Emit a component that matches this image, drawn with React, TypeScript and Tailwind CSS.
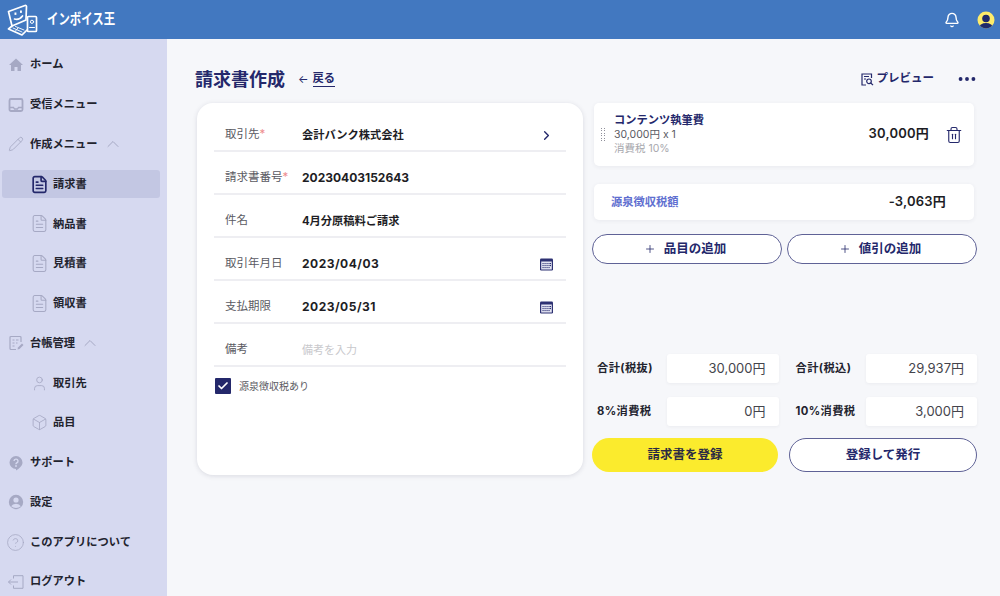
import React from 'react';
import {
  Bell,
  Box,
  Check,
  ChevronRight,
  ChevronUp,
  CircleHelp,
  FileText,
  MoreHorizontal,
  Pencil,
  Plus,
  Trash2,
  User,
} from 'lucide-react';

const Logo = () => (
  <svg width="31" height="32" viewBox="0 0 31 32" fill="none" stroke="white" strokeWidth="1.7" strokeLinejoin="round" strokeLinecap="round">
    <path d="M1.5 7.5 L18 1.5 Q19.5 1.2 19.5 2.5 L19 15 M1.5 7.5 L5 22 L19 16" />
    <path d="M5 22 L1.5 25 L15 31 L20 26" />
    <path d="M6 24 L15 28 M8.5 22.5 L17 26 M11 24 L8.5 27" strokeWidth="0.9" />
    <rect x="7.5" y="8.5" width="1.9" height="2.4" fill="white" stroke="none" />
    <rect x="13" y="6.5" width="1.9" height="2.4" fill="white" stroke="none" />
    <path d="M7.5 15 Q12 16.5 15.5 12" />
    <rect x="20.5" y="12.5" width="9" height="15" rx="1" />
    <circle cx="25" cy="17.8" r="1.6" strokeWidth="1" />
    <path d="M22.5 23.5 H27.5" strokeWidth="1" />
  </svg>
);

const HomeIcon = () => (
  <svg width="16" height="16" viewBox="0 0 16 16" fill="#a6a9c4">
    <path d="M8 1.5 L15 8 H13 V14 H9.5 V10 H6.5 V14 H3 V8 H1 Z" />
  </svg>
);

const InboxIcon = () => (
  <svg width="16" height="16" viewBox="0 0 16 16" fill="none" stroke="#a6a9c4" strokeWidth="1.8">
    <rect x="1.5" y="2" width="13" height="12" rx="1.5" />
    <path d="M2 10.5 H5.5 L6.5 12 H9.5 L10.5 10.5 H14" strokeWidth="1.3" />
  </svg>
);

const LedgerIcon = () => (
  <svg width="16" height="16" viewBox="0 0 16 16" fill="none" stroke="#a6a9c4" strokeWidth="1.2">
    <path d="M13 7 V2.5 A1 1 0 0 0 12 1.5 H3 A1 1 0 0 0 2 2.5 V13.5 A1 1 0 0 0 3 14.5 H8" />
    <path d="M4.5 5h2M8 5h2.5M4.5 8h2M8 8h1.5M4.5 11h2" />
    <path d="M9.5 14.5 L10 12.5 L14 8.5 L15.5 10 L11.5 14 Z" fill="#a6a9c4" stroke="none" />
  </svg>
);

const SupportIcon = () => (
  <svg width="16" height="16" viewBox="0 0 16 16">
    <path d="M8 1 A6.5 6.5 0 0 1 14.5 7.5 C14.5 11 11 13.5 8 15.5 C8 14 8 14 8 14 A6.5 6.5 0 0 1 8 1 Z" fill="#a6a9c4" />
    <path d="M6 6 A2 2 0 1 1 8.6 8 Q8 8.3 8 9.2" fill="none" stroke="#d6d9f0" strokeWidth="1.4" />
    <circle cx="8" cy="11" r="0.9" fill="#d6d9f0" />
  </svg>
);

const SettingsIcon = () => (
  <svg width="16" height="16" viewBox="0 0 16 16">
    <circle cx="8" cy="8" r="7.2" fill="#a6a9c4" />
    <circle cx="8" cy="6" r="2.6" fill="#d6d9f0" />
    <path d="M3.2 12.3 Q4.5 9.8 8 9.8 Q11.5 9.8 12.8 12.3 Q10.8 14 8 14 Q5.2 14 3.2 12.3 Z" fill="#d6d9f0" />
  </svg>
);

const LogoutIcon = () => (
  <svg width="16" height="14" viewBox="0 0 16 14" fill="none" stroke="#a6a9c4" strokeWidth="1">
    <path d="M5.5 3.5 V0.7 H15 V13.3 H5.5 V10.5" />
    <path d="M0.5 7 H10 M3 4.5 L0.5 7 L3 9.5" />
  </svg>
);

const CalendarIcon = () => (
  <svg width="13" height="13" viewBox="0 0 13 13">
    <rect x="0" y="0.5" width="13" height="12" rx="1.2" fill="#2d3172" />
    <rect x="1.2" y="3.5" width="10.6" height="8" fill="#e3e4f2" />
    {[2.5, 4.5, 6.5, 8.5].map((x) => (
      <React.Fragment key={x}>
        <rect x={x} y="5" width="1.1" height="1.1" fill="#2d3172" />
        <rect x={x} y="7" width="1.1" height="1.1" fill="#2d3172" />
        <rect x={x} y="9" width="1.1" height="1.1" fill="#2d3172" />
      </React.Fragment>
    ))}
    <rect x="10" y="5" width="1" height="1.1" fill="#2d3172" />
    <rect x="10" y="7" width="1" height="1.1" fill="#2d3172" />
  </svg>
);

const PreviewIcon = () => (
  <svg width="13" height="13" viewBox="0 0 13 13" fill="none" stroke="#24286b" strokeWidth="1.2">
    <path d="M5 12 H1 V1 H10.5 V5" />
    <path d="M3 3.5h5M3 6h2" strokeWidth="1" />
    <circle cx="8" cy="8.3" r="2.3" />
    <path d="M9.8 10 L12 12.2" />
  </svg>
);

const AvatarIcon = () => (
  <svg width="18" height="18" viewBox="0 0 18 18">
    <defs>
      <clipPath id="avatar-clip">
        <circle cx="9" cy="9" r="8.5" />
      </clipPath>
    </defs>
    <circle cx="9" cy="9" r="8.5" fill="#fdeb6a" />
    <g clipPath="url(#avatar-clip)" fill="#1f2a6b">
      <circle cx="9" cy="7.5" r="3.8" />
      <ellipse cx="9" cy="17" rx="7" ry="5" />
    </g>
  </svg>
);

const DragHandle = () => (
  <div className="grid grid-cols-2 gap-x-[2px] gap-y-[1.5px]">
    {Array.from({ length: 12 }).map((_, i) => (
      <span key={i} className="block h-px w-px bg-[#8f8f9a]" />
    ))}
  </div>
);

const docIcon = (active: boolean) => (
  <FileText size={19} strokeWidth={active ? 2.1 : 1.3} className={active ? 'ml-[-1px] text-[#24286b]' : 'ml-[-1px] text-[#a6a9c4]'} />
);

const NavItem = ({ icon, label, open }: { icon: React.ReactNode; label: string; open?: boolean }) => (
  <div className="flex h-[39.77px] items-center pl-[8px]">
    <span className="flex w-[22px] shrink-0 items-center">{icon}</span>
    <span className="text-[11.25px] font-bold text-[#22232e]">{label}</span>
    {open && <ChevronUp size={20} strokeWidth={1.2} className="ml-[5px] text-[#a6a9c4]" />}
  </div>
);

const SubItem = ({ icon, label, active }: { icon: React.ReactNode; label: string; active?: boolean }) => (
  <div className="flex h-[39.77px] items-center">
    <div className={`ml-[2px] flex h-[28px] w-[158px] items-center rounded-[3px] pl-[29px] ${active ? 'bg-[#c3c7e3]' : ''}`}>
      <span className="flex w-[22px] shrink-0 items-center">{icon}</span>
      <span className="text-[11.25px] font-bold text-[#22232e]">{label}</span>
    </div>
  </div>
);

const Sidebar = () => (
  <aside className="h-full w-[167px] shrink-0 overflow-hidden bg-[#d6d9f0] pt-[6px]">
    <NavItem icon={<HomeIcon />} label="ホーム" />
    <NavItem icon={<InboxIcon />} label="受信メニュー" />
    <NavItem icon={<Pencil size={16} strokeWidth={1.3} className="text-[#a6a9c4]" />} label="作成メニュー" open />
    <SubItem icon={docIcon(true)} label="請求書" active />
    <SubItem icon={docIcon(false)} label="納品書" />
    <SubItem icon={docIcon(false)} label="見積書" />
    <SubItem icon={docIcon(false)} label="領収書" />
    <NavItem icon={<LedgerIcon />} label="台帳管理" open />
    <SubItem icon={<User size={17} strokeWidth={1.2} className="text-[#a6a9c4]" />} label="取引先" />
    <SubItem icon={<Box size={17} strokeWidth={1.2} className="text-[#a6a9c4]" />} label="品目" />
    <NavItem icon={<SupportIcon />} label="サポート" />
    <NavItem icon={<SettingsIcon />} label="設定" />
    <NavItem icon={<CircleHelp size={19} strokeWidth={1} className="ml-[-2px] text-[#a6a9c4]" />} label="このアプリについて" />
    <NavItem icon={<LogoutIcon />} label="ログアウト" />
  </aside>
);

const FormRow = ({ label, required, children, right }: { label: string; required?: boolean; children: React.ReactNode; right?: React.ReactNode }) => (
  <div className="flex h-[43px] items-center border-b-2 border-[#eeeef2] pl-[11px] pr-[13px] pt-[11px]">
    <span className="w-[77px] shrink-0 text-[11.5px] text-[#5a5a62]">
      {label}
      {required && <span className="text-[#ee8d8d]">*</span>}
    </span>
    <div className="flex-1 text-[11.25px] font-bold text-[#1d1d24]">{children}</div>
    {right}
  </div>
);

const TotalCell = ({ label, value }: { label: string; value: string }) => (
  <div className="flex items-center">
    <span className="w-[70px] shrink-0 text-[11.25px] font-bold tracking-[0.4px] text-[#22232e]">{label}</span>
    <span className="flex h-[29px] flex-1 items-center justify-end rounded-[3px] bg-white pr-[13px] text-[13px] text-[#44444c] shadow-[0_1px_3px_rgba(60,60,90,0.06)]">{value}</span>
  </div>
);

const OutlineButton = ({ children, className }: { children: React.ReactNode; className?: string }) => (
  <button className={`flex flex-1 items-center justify-center rounded-full border border-[#5f6296] bg-white text-[12.5px] font-bold text-[#24286b] ${className ?? ''}`}>
    {children}
  </button>
);

export default function App() {
  return (
    <div className="flex h-[596px] w-[1000px] flex-col overflow-hidden bg-[#f6f7fa] font-['Inter','Noto_Sans_CJK_JP',sans-serif]">
      <header className="flex h-[39px] shrink-0 items-center bg-[#4278c0] pl-[7px] pr-[5px]">
        <Logo />
        <span className="ml-[9px] origin-left scale-x-[0.76] text-[15px] font-bold text-white">インボイス王</span>
        <div className="ml-auto flex items-center gap-[17px]">
          <Bell size={16} strokeWidth={2.1} className="text-white" />
          <AvatarIcon />
        </div>
      </header>
      <div className="flex min-h-0 flex-1">
        <Sidebar />
        <main className="min-w-0 flex-1 pl-[30px] pr-[23px] pt-[28px]">
          <div className="flex h-[24px] items-center">
            <h1 className="ml-[-2px] text-[18px] font-bold text-[#24286b]">請求書作成</h1>
            <span className="ml-[13px] text-[11px] text-[#24286b]">←</span>
            <span className="ml-[4px] border-b border-[#24286b] text-[11.25px] font-semibold leading-[15px] text-[#24286b]">戻る</span>
            <div className="ml-auto flex items-center">
              <PreviewIcon />
              <span className="ml-[3px] text-[11.5px] font-semibold text-[#24286b]">プレビュー</span>
              <MoreHorizontal size={22} strokeWidth={2.2} className="ml-[22px] mr-[-1px] text-[#24286b]" />
            </div>
          </div>
          <div className="mt-[12px] flex">
            <section className="h-[372px] w-[386px] shrink-0 rounded-[16px] bg-white px-[17px] pt-[6px] shadow-[0_1px_5px_rgba(50,50,80,0.14)]">
              <FormRow label="取引先" required right={<ChevronRight size={15} strokeWidth={2.2} className="mr-[-1px] text-[#24286b]" />}>
                会計バンク株式会社
              </FormRow>
              <FormRow label="請求書番号" required><span className="text-[12px]">20230403152643</span></FormRow>
              <FormRow label="件名">4月分原稿料ご請求</FormRow>
              <FormRow label="取引年月日" right={<CalendarIcon />}><span className="text-[12px] tracking-[0.5px]">2023/04/03</span></FormRow>
              <FormRow label="支払期限" right={<CalendarIcon />}><span className="text-[12px] tracking-[0.5px]">2023/05/31</span></FormRow>
              <FormRow label="備考">
                <span className="text-[11px] font-normal text-[#c8c8cc]">備考を入力</span>
              </FormRow>
              <label className="mt-[11px] flex items-center pl-[1px]">
                <span className="flex h-[16px] w-[16px] items-center justify-center rounded-[1px] bg-[#24286b]">
                  <Check size={12} strokeWidth={3.5} className="text-white" />
                </span>
                <span className="ml-[8px] text-[10px] text-[#5a5a62]">源泉徴収税あり</span>
              </label>
            </section>
            <section className="ml-[9px] flex-1">
              <div className="ml-[2px] mr-[3px] flex h-[63px] items-center rounded-[5px] bg-white pl-[7px] pr-[11px] shadow-[0_1px_4px_rgba(60,60,90,0.07)]">
                <DragHandle />
                <div className="ml-[9px]">
                  <div className="text-[11.25px] font-semibold leading-[15px] text-[#24286b]">コンテンツ執筆費</div>
                  <div className="text-[10.5px] leading-[14.5px] text-[#5a5a62]">30,000円 x 1</div>
                  <div className="text-[10.5px] leading-[14px] text-[#a8a8ae]">消費税 10%</div>
                </div>
                <span className="ml-auto pb-[2px] text-[13px] font-semibold tracking-[0.2px] text-[#1d1d24]">30,000円</span>
                <Trash2 size={18} strokeWidth={1.5} className="ml-[16px] text-[#24286b]" />
              </div>
              <div className="ml-[2px] mr-[3px] mt-[18px] flex h-[36px] items-center rounded-[5px] bg-white pl-[17px] pr-[28px] shadow-[0_1px_4px_rgba(60,60,90,0.07)]">
                <span className="text-[11.25px] font-semibold text-[#5f6fd0]">源泉徴収税額</span>
                <span className="ml-auto text-[13px] font-semibold tracking-[0.2px] text-[#1d1d24]">-3,063円</span>
              </div>
              <div className="mt-[14px] flex h-[30px] gap-[5px]">
                <OutlineButton className="pr-[4px]">
                  <Plus size={12} strokeWidth={1.6} className="mr-[8px]" />品目の追加
                </OutlineButton>
                <OutlineButton className="pr-[4px]">
                  <Plus size={12} strokeWidth={1.6} className="mr-[8px]" />値引の追加
                </OutlineButton>
              </div>
              <div className="mt-[90px] grid grid-cols-2 gap-x-[17px] gap-y-[14px] pl-[5px]">
                <TotalCell label="合計(税抜)" value="30,000円" />
                <TotalCell label="合計(税込)" value="29,937円" />
                <TotalCell label="8%消費税" value="0円" />
                <TotalCell label="10%消費税" value="3,000円" />
              </div>
              <div className="mt-[12px] flex h-[34px] gap-[11px]">
                <button className="flex-1 rounded-full bg-[#fbeb2d] text-[12.5px] font-bold text-[#2a2a44]">請求書を登録</button>
                <OutlineButton>登録して発行</OutlineButton>
              </div>
            </section>
          </div>
        </main>
      </div>
    </div>
  );
}
